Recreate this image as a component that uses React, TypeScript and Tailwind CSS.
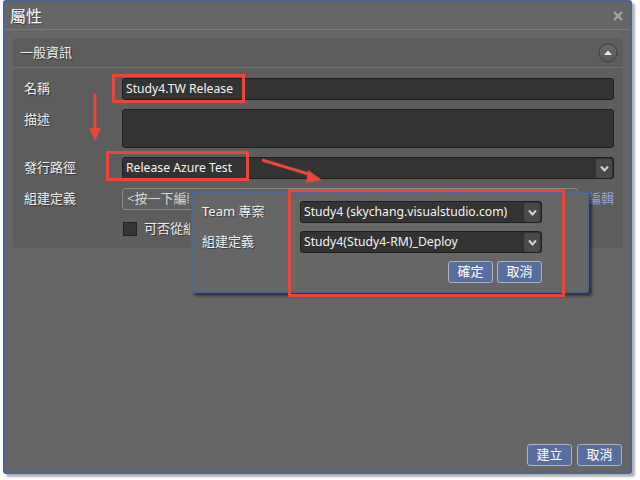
import type { ReactNode } from "react";

const font = "font-['Noto_Sans','Noto_Sans_CJK_TC',sans-serif]";
const labelCls =
  "h-[21px] text-[13px] leading-[21px] text-[#eeeeee] [text-shadow:1px_1px_1px_rgba(0,0,0,0.45)]";

function Chevron() {
  return (
    <span className="flex h-[19px] w-[16px] items-center justify-center rounded-[3px] bg-[#4a4a4a]">
      <svg width="9" height="7" viewBox="0 0 9 7">
        <polyline points="1,1.5 4.5,5.5 8,1.5" fill="none" stroke="#cfcfcf" strokeWidth="2" />
      </svg>
    </span>
  );
}

function Field({ children, tall, select }: { children?: ReactNode; tall?: boolean; select?: boolean }) {
  return (
    <div
      className={
        "flex items-center justify-between rounded-[3px] border border-[#1f1f1f] bg-[#333333] pl-[3px] pr-[1px] text-[12.2px] text-[#f4f4f4] " +
        (tall ? "h-[39px]" : "h-[22px]")
      }
    >
      <span className="truncate">{children}</span>
      {select && <Chevron />}
    </div>
  );
}

function Btn({ children }: { children: ReactNode }) {
  return (
    <button className="flex h-[22px] w-[45px] items-center justify-center rounded-[3px] border border-[#a9b2c6] bg-[#5a6e9d] text-[13px] text-white">
      {children}
    </button>
  );
}

export default function App() {
  return (
    <div className={"relative h-[480px] w-[640px] overflow-hidden bg-white pl-[3px] " + font}>
      <div className="flex h-[474px] w-[629px] flex-col rounded-[3px] border-2 border-[#4a6594] bg-[#666666] shadow-[3px_3px_2px_rgba(0,0,0,0.3)]">
        {/* title bar */}
        <div className="flex h-[28px] items-center justify-between border-b border-[#7b7b7b] pl-[5px] pr-[7px]">
          <span className="text-[16px] text-white [text-shadow:1px_1px_1px_rgba(0,0,0,0.4)]">屬性</span>
          <svg width="10" height="10" viewBox="0 0 10 10">
            <path d="M1 1L9 9M9 1L1 9" stroke="#a8a8a8" strokeWidth="2" />
          </svg>
        </div>

        {/* general info panel */}
        <div className="ml-[8px] mr-[7px] mt-[8px] rounded-[4px] bg-[#5d5d5d]">
          <div className="flex h-[30px] items-center justify-between border-b border-[#707070] pl-[7px] pr-[5px]">
            <span className="text-[13px] text-[#eeeeee] [text-shadow:1px_1px_1px_rgba(0,0,0,0.45)]">一般資訊</span>
            <svg width="20" height="20" viewBox="0 0 20 20">
              <defs>
                <linearGradient id="cg" x1="0" y1="0" x2="0" y2="1">
                  <stop offset="0" stopColor="#6a6a6a" />
                  <stop offset="1" stopColor="#555555" />
                </linearGradient>
              </defs>
              <circle cx="10" cy="10" r="9" fill="url(#cg)" stroke="#3e3e3e" strokeWidth="1" />
              <polygon points="6,12 14,12 10,7.5" fill="#e6e6e6" />
            </svg>
          </div>

          <div className="grid grid-cols-[98px_1fr] gap-y-[9px] pb-[9px] pl-[11px] pr-[9px] pt-[10px]">
            <span className={labelCls}>名稱</span>
            <Field>Study4.TW Release</Field>

            <span className={labelCls}>描述</span>
            <Field tall />

            <span className={labelCls}>發行路徑</span>
            <Field select>Release Azure Test</Field>

            <span className={labelCls}>組建定義</span>
            <div className="flex items-center">
              <div className="flex h-[22px] flex-1 items-center overflow-hidden rounded-[3px] border border-[#8a8a8a] bg-[#606060] pl-[4px] text-[13px] text-[#d6d6d6]">
                <span className="w-[62px] overflow-hidden whitespace-nowrap">&lt;按一下編輯...&gt;</span>
              </div>
              <span className="ml-[10px] text-[13px] text-[#8fa2d6]">編輯</span>
            </div>

            <span />
            <div className="flex items-center gap-[7px] pl-[1px]">
              <span className="h-[14px] w-[14px] border border-[#222222] bg-[#353535]" />
              <span className="w-[46px] overflow-hidden whitespace-nowrap text-[13px] text-[#eeeeee] [text-shadow:1px_1px_1px_rgba(0,0,0,0.45)]">
                可否從組建定義觸發
              </span>
            </div>
          </div>
        </div>

        <div className="flex-1" />

        <div className="mb-[6px] mr-[8px] flex justify-end gap-[5px]">
          <Btn>建立</Btn>
          <Btn>取消</Btn>
        </div>
      </div>

      {/* popup editor */}
      <div className="absolute left-[191px] top-[191px] h-[102px] w-[398px] rounded-[3px] border-2 border-[#4a6594] bg-[#666666] shadow-[3px_3px_3px_rgba(0,0,0,0.5)]">
        <div className="grid grid-cols-[98px_242px] gap-y-[8px] pl-[9px] pt-[8px]">
          <span className={labelCls}>Team 專案</span>
          <Field select>Study4 (skychang.visualstudio.com)</Field>
          <span className={labelCls}>組建定義</span>
          <Field select>Study4(Study4-RM)_Deploy</Field>
          <span />
          <div className="flex justify-end gap-[4px]">
            <Btn>確定</Btn>
            <Btn>取消</Btn>
          </div>
        </div>
      </div>

      {/* annotations */}
      <svg className="pointer-events-none absolute left-0 top-0" width="640" height="480" viewBox="0 0 640 480">
        <g fill="none" stroke="#e8473c" strokeWidth="3">
          <rect x="113.5" y="75.5" width="130" height="26" />
          <rect x="107.5" y="152.5" width="140" height="27" />
          <rect x="289.5" y="190.5" width="274" height="105" />
          <line x1="95" y1="94" x2="95" y2="129" />
          <line x1="262" y1="160" x2="312" y2="175" />
        </g>
        <polygon points="89,128 101,128 95,141" fill="#e8473c" />
        <polygon points="308,170 322,180 306,183" fill="#e8473c" />
      </svg>
    </div>
  );
}
